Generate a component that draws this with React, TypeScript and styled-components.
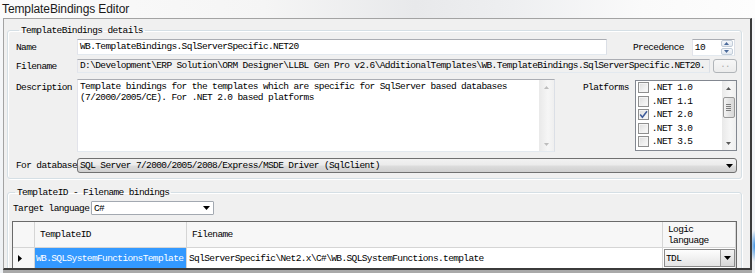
import React from "react";
import styled, { createGlobalStyle } from "styled-components";

const GlobalStyle = createGlobalStyle`
  html, body { margin: 0; padding: 0; }
  body { width: 755px; height: 273px; overflow: hidden; background: #fff; }
  * { box-sizing: border-box; }
`;

const MONO = `"Liberation Mono", "DejaVu Sans Mono", monospace`;

const Screen = styled.div`
  width: 755px;
  height: 273px;
  overflow: hidden;
  display: flex;
  flex-direction: column;
  background:
    radial-gradient(ellipse 5px 16px at 755px 246px, #3b8fe0 0%, rgba(59, 143, 224, 0) 100%),
    linear-gradient(180deg, #f7f8fa 0%, #eef1f4 100%);
  font-family: ${MONO};
  font-size: 9.5px;
  letter-spacing: -0.62px;
  color: #000;
`;

const TitleBar = styled.div`
  flex: 0 0 18px;
  padding-left: 2px;
  display: flex;
  align-items: center;
  font-family: "Liberation Sans", Arial, sans-serif;
  font-size: 12px;
  letter-spacing: -0.1px;
  color: #1a1a1a;
  background: linear-gradient(90deg, #fbfbfb 0%, #f5f5f5 35%, #e8e9eb 55%, #eeeff1 68%, #fafafa 85%, #fdfdfd 100%);
`;

const Window = styled.div`
  flex: 1 1 auto;
  min-height: 0;
  overflow: hidden;
  margin-left: 3px;
  width: 749px;
  background: #f0f0f0;
  border-top: 1px solid #a3a3a3;
  border-left: 1px solid #a3a3a3;
  border-right: 2px solid #3b3b3b;
  border-bottom: 2px solid #3b3b3b;
  padding: 6px 8px 0 3px;
  display: flex;
  flex-direction: column;
  gap: 8px;
`;

const BottomShade = styled.div`
  flex: 0 0 3px;
  margin-left: 3px;
  width: 749px;
  background: #a9a9a9;
`;

const Group = styled.fieldset<{ $pl: number }>`
  margin: 0;
  min-width: 0;
  flex: 0 0 auto;
  padding: 3px 4px 5px ${(p) => p.$pl}px;
  border: 1px solid #d5dfe5;
  border-radius: 3px;
  box-shadow: inset 1px 1px 0 #ffffff, 1px 1px 0 #ffffff;
`;

const Legend = styled.legend`
  padding: 0 2px;
  margin-left: 3px;
  line-height: 11px;
  white-space: nowrap;
`;

const FieldRow = styled.div<{ $h: number; $mb?: number; $top?: boolean }>`
  display: flex;
  align-items: ${(p) => (p.$top ? "flex-start" : "center")};
  height: ${(p) => p.$h}px;
  margin-bottom: ${(p) => p.$mb ?? 0}px;
`;

const Label = styled.div<{ $w?: number; $ml?: number; $pt?: number }>`
  flex: 0 0 ${(p) => (p.$w ? `${p.$w}px` : "auto")};
  margin-left: ${(p) => p.$ml ?? 0}px;
  padding-top: ${(p) => p.$pt ?? 0}px;
  white-space: nowrap;
  line-height: 11px;
`;

const TextBox = styled.div<{ $w: number; $h: number; $readOnly?: boolean }>`
  flex: 0 0 ${(p) => p.$w}px;
  height: ${(p) => p.$h}px;
  border: 1px solid;
  border-color: #abadb3 #dbdfe6 #e3e9ef #e2e3ea;
  background: ${(p) => (p.$readOnly ? "#f0f0f0" : "#ffffff")};
  padding: 0 2px;
  line-height: ${(p) => p.$h - 2}px;
  overflow: hidden;
  white-space: nowrap;
`;

const Spin = styled.div`
  flex: 0 0 43px;
  height: 17px;
  margin-left: 8px;
  display: flex;
  border: 1px solid;
  border-color: #abadb3 #dbdfe6 #e3e9ef #e2e3ea;
  background: #fff;
`;

const SpinValue = styled.div`
  flex: 1;
  padding-left: 2px;
  line-height: 15px;
`;

const SpinButtons = styled.div`
  flex: 0 0 13px;
  display: flex;
  flex-direction: column;
  gap: 1px;
  padding: 0 1px 0 0;
`;

const SpinButton = styled.div`
  flex: 1;
  display: flex;
  align-items: center;
  justify-content: center;
  border: 1px solid #c2cdd9;
  border-radius: 2px;
  background: linear-gradient(180deg, #f6f8fb 0%, #e3e9f0 100%);
`;

const DotButton = styled.div`
  flex: 0 0 24px;
  height: 14px;
  margin-left: 3px;
  border: 1px solid #b1b5b9;
  border-radius: 3px;
  background: linear-gradient(180deg, #f7f7f7 0%, #ececec 100%);
  color: #a8a8a8;
  text-align: center;
  line-height: 10px;
  font-size: 9px;
`;

const MemoBox = styled.div`
  flex: 0 0 478px;
  height: 73px;
  display: flex;
  border: 1px solid;
  border-color: #abadb3 #dbdfe6 #e3e9ef #e2e3ea;
  background: #fff;
`;

const MemoText = styled.div`
  flex: 1;
  padding: 2px 2px;
  line-height: 10.5px;
  white-space: nowrap;
  overflow: hidden;
`;

const VScroll = styled.div<{ $w: number }>`
  flex: 0 0 ${(p) => p.$w}px;
  display: flex;
  flex-direction: column;
  justify-content: space-between;
  background: linear-gradient(90deg, #e9e9e9 0%, #f6f6f6 60%, #efefef 100%);
`;

const ScrollArrow = styled.div`
  height: 14px;
  display: flex;
  align-items: center;
  justify-content: center;
`;

const ScrollTrack = styled.div`
  flex: 1;
  display: flex;
  flex-direction: column;
  padding: 2px 1px 0;
`;

const Thumb = styled.div`
  height: 21px;
  border: 1px solid #989898;
  border-radius: 2px;
  background: linear-gradient(90deg, #f3f3f3 0%, #e3e3e3 50%, #d8d8d8 100%);
  display: flex;
  flex-direction: column;
  align-items: center;
  justify-content: center;
  gap: 1px;
`;

const Grip = styled.div`
  width: 5px;
  height: 1px;
  background: #7d7d7d;
`;

const ListBox = styled.div`
  flex: 0 0 102px;
  height: 71px;
  margin-top: 1px;
  margin-left: 6px;
  display: flex;
  border: 1px solid #828790;
  background: #fff;
`;

const ListItems = styled.div`
  flex: 1;
  padding: 0 0 0 2px;
  overflow: hidden;
`;

const ListItem = styled.div`
  height: 13.5px;
  display: flex;
  align-items: center;
  gap: 3px;
  white-space: nowrap;
`;

const CheckBox = styled.div`
  flex: 0 0 11px;
  height: 11px;
  border: 1px solid #8f8f8f;
  background: linear-gradient(135deg, #dcdcdc 0%, #f0f0f0 60%, #fbfbfb 100%);
  box-shadow: inset 0 0 0 1px #f4f4f4;
  display: flex;
  align-items: center;
  justify-content: center;
`;

const Combo = styled.div<{ $white?: boolean; $w?: number }>`
  flex: ${(p) => (p.$w ? `0 0 ${p.$w}px` : "1 1 auto")};
  height: ${(p) => (p.$white ? 14 : 15)}px;
  display: flex;
  align-items: center;
  border: 1px solid ${(p) => (p.$white ? "#a3a9b1" : "#707070")};
  border-radius: ${(p) => (p.$white ? 1 : 3)}px;
  background: ${(p) =>
    p.$white
      ? "#ffffff"
      : "linear-gradient(180deg, #f2f2f2 0%, #ebebeb 48%, #dddddd 52%, #cfcfcf 100%)"};
  padding-left: 2px;
  white-space: nowrap;
  overflow: hidden;
`;

const ComboText = styled.div`
  flex: 1;
  overflow: hidden;
`;

const ComboArrow = styled.div<{ $boxed?: boolean }>`
  flex: 0 0 ${(p) => (p.$boxed ? 14 : 13)}px;
  align-self: stretch;
  display: flex;
  align-items: center;
  justify-content: center;
  border-left: ${(p) => (p.$boxed ? "1px solid #9a9a9a" : "none")};
  background: ${(p) =>
    p.$boxed ? "linear-gradient(180deg, #f4f4f4 0%, #e6e6e6 50%, #d6d6d6 100%)" : "transparent"};
`;

const Grid = styled.div`
  display: grid;
  grid-template-columns: 22px 152px 476px 73px;
  grid-template-rows: 26px 20px;
  width: 725px;
  margin-top: 6px;
  border: 1px solid #6a6a6a;
  border-bottom: none;
  background: #fff;
`;

const HeadCell = styled.div`
  display: flex;
  align-items: center;
  padding-left: 5px;
  background: #f7f7f7;
  border-right: 1px solid #d5d5d5;
  border-bottom: 1px solid #d5d5d5;
  line-height: 11px;
  white-space: nowrap;
  &:last-child {
    border-right: none;
  }
`;

const RowHead = styled.div`
  display: flex;
  align-items: center;
  padding-left: 5px;
  background: #f7f7f7;
  border-right: 1px solid #d5d5d5;
`;

const Cell = styled.div<{ $selected?: boolean; $pad?: number }>`
  display: flex;
  align-items: center;
  padding-left: ${(p) => p.$pad ?? 2}px;
  background: ${(p) => (p.$selected ? "#3399ff" : "#ffffff")};
  color: ${(p) => (p.$selected ? "#ffffff" : "#000000")};
  border-right: 1px solid #d5d5d5;
  white-space: nowrap;
  overflow: hidden;
`;

const CellCombo = styled.div`
  flex: 1;
  height: 18px;
  margin: 0 0 0 1px;
  display: flex;
  align-items: center;
  border: 1px solid #8a8a8a;
  background: linear-gradient(180deg, #fdfdfd 0%, #f1f1f1 50%, #e4e4e4 100%);
  padding-left: 1px;
`;

type Dir = "up" | "down" | "right";

const Tri: React.FC<{ dir: Dir; w: number; h: number; color: string }> = ({ dir, w, h, color }) => {
  const pts =
    dir === "up"
      ? `0,${h} ${w},${h} ${w / 2},0`
      : dir === "down"
      ? `0,0 ${w},0 ${w / 2},${h}`
      : `0,0 ${w},${h / 2} 0,${h}`;
  return (
    <svg width={w} height={h} viewBox={`0 0 ${w} ${h}`} style={{ display: "block" }}>
      <polygon points={pts} fill={color} />
    </svg>
  );
};

const Check: React.FC = () => (
  <svg width="9" height="9" viewBox="0 0 9 9" style={{ display: "block" }}>
    <path d="M1.2 4.6 L3.4 7.2 L8 1.2" fill="none" stroke="#3e5b9a" strokeWidth="1.5" />
  </svg>
);

const platforms = [
  { name: ".NET 1.0", checked: false },
  { name: ".NET 1.1", checked: false },
  { name: ".NET 2.0", checked: true },
  { name: ".NET 3.0", checked: false },
  { name: ".NET 3.5", checked: false },
];

export default function App() {
  return (
    <>
      <GlobalStyle />
      <Screen>
        <TitleBar>TemplateBindings Editor</TitleBar>
        <Window>
          <Group $pl={8}>
            <Legend>TemplateBindings details</Legend>
            <FieldRow $h={16} $mb={4}>
              <Label $w={61}>Name</Label>
              <TextBox $w={530} $h={16}>WB.TemplateBindings.SqlServerSpecific.NET20</TextBox>
              <Label $ml={26}>Precedence</Label>
              <Spin>
                <SpinValue>10</SpinValue>
                <SpinButtons>
                  <SpinButton>
                    <Tri dir="up" w={5} h={3} color="#4a6a9a" />
                  </SpinButton>
                  <SpinButton>
                    <Tri dir="down" w={5} h={3} color="#4a6a9a" />
                  </SpinButton>
                </SpinButtons>
              </Spin>
            </FieldRow>
            <FieldRow $h={14} $mb={6}>
              <Label $w={61}>Filename</Label>
              <TextBox $w={633} $h={14} $readOnly>
                D:\Development\ERP Solution\ORM Designer\LLBL Gen Pro v2.6\AdditionalTemplates\WB.TemplateBindings.SqlServerSpecific.NET20.
              </TextBox>
              <DotButton>..</DotButton>
            </FieldRow>
            <FieldRow $h={73} $mb={6} $top>
              <Label $w={61} $pt={3}>Description</Label>
              <MemoBox>
                <MemoText>
                  Template bindings for the templates which are specific for SqlServer based databases
                  <br />
                  (7/2000/2005/CE). For .NET 2.0 based platforms
                </MemoText>
                <VScroll $w={15}>
                  <ScrollArrow>
                    <Tri dir="up" w={5} h={3} color="#bdbdbd" />
                  </ScrollArrow>
                  <ScrollArrow>
                    <Tri dir="down" w={5} h={3} color="#bdbdbd" />
                  </ScrollArrow>
                </VScroll>
              </MemoBox>
              <Label $ml={28} $pt={3}>Platforms</Label>
              <ListBox>
                <ListItems>
                  {platforms.map((p) => (
                    <ListItem key={p.name}>
                      <CheckBox>{p.checked && <Check />}</CheckBox>
                      {p.name}
                    </ListItem>
                  ))}
                </ListItems>
                <VScroll $w={14}>
                  <ScrollArrow>
                    <Tri dir="up" w={5} h={3} color="#5a5a5a" />
                  </ScrollArrow>
                  <ScrollTrack>
                    <Thumb>
                      <Grip />
                      <Grip />
                      <Grip />
                      <Grip />
                    </Thumb>
                  </ScrollTrack>
                  <ScrollArrow>
                    <Tri dir="down" w={5} h={3} color="#5a5a5a" />
                  </ScrollArrow>
                </VScroll>
              </ListBox>
            </FieldRow>
            <FieldRow $h={15}>
              <Label $w={61}>For database</Label>
              <Combo>
                <ComboText>SQL Server 7/2000/2005/2008/Express/MSDE Driver (SqlClient)</ComboText>
                <ComboArrow>
                  <Tri dir="down" w={7} h={4} color="#000" />
                </ComboArrow>
              </Combo>
            </FieldRow>
          </Group>
          <Group $pl={4}>
            <Legend>TemplateID - Filename bindings</Legend>
            <FieldRow $h={14}>
              <Label $w={78} $ml={1}>Target language</Label>
              <Combo $white $w={123}>
                <ComboText>C#</ComboText>
                <ComboArrow>
                  <Tri dir="down" w={7} h={4} color="#000" />
                </ComboArrow>
              </Combo>
            </FieldRow>
            <Grid>
              <HeadCell />
              <HeadCell>TemplateID</HeadCell>
              <HeadCell>Filename</HeadCell>
              <HeadCell>
                Logic
                <br />
                language
              </HeadCell>
              <RowHead>
                <Tri dir="right" w={4} h={7} color="#000" />
              </RowHead>
              <Cell $selected $pad={1}>WB.SQLSystemFunctionsTemplate</Cell>
              <Cell>SqlServerSpecific\Net2.x\C#\WB.SQLSystemFunctions.template</Cell>
              <Cell $pad={0}>
                <CellCombo>
                  <ComboText>TDL</ComboText>
                  <ComboArrow $boxed>
                    <Tri dir="down" w={7} h={4} color="#000" />
                  </ComboArrow>
                </CellCombo>
              </Cell>
            </Grid>
          </Group>
        </Window>
        <BottomShade />
      </Screen>
    </>
  );
}
